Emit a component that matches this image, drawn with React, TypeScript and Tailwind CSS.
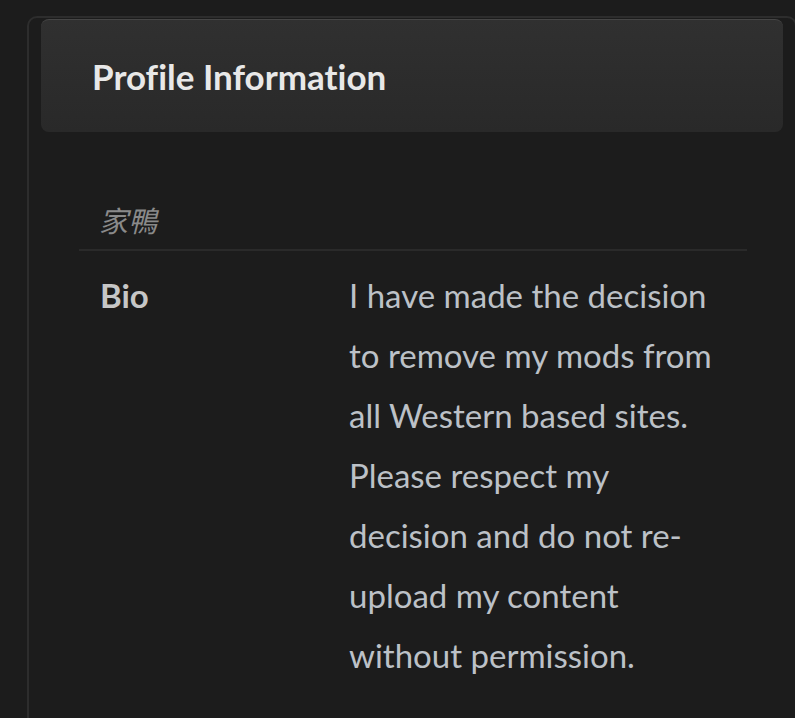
import React from 'react';

const bio = [
  'I have made the decision',
  'to remove my mods from',
  'all Western based sites.',
  'Please respect my',
  'decision and do not re-',
  'upload my content',
  'without permission.',
];

const App = () => {
  return (
    <div
      className="min-h-screen overflow-hidden bg-[#1c1c1c] pl-[27px] pt-[16px] [font-variant-ligatures:none]"
      style={{ fontFamily: 'Lato, "Noto Sans CJK SC", sans-serif' }}
    >
      <div className="w-[770px] rounded-t-[10px] border-2 border-[#2d2d2d] px-[12px] pt-[1px] pb-10">
        <div className="flex h-[113px] items-center rounded-[8px] border-t border-[#464646] bg-gradient-to-b from-[#303030] to-[#292929] pl-[51px]">
          <h2 className="text-[35px] font-bold text-[#e8e8e8]">Profile Information</h2>
        </div>

        <div className="pl-[38px] pr-[36px] pt-[69px]">
          <div className="border-b-2 border-[#2a2a2a] pb-[11px] pl-[20px]">
            <span
              className="text-[29px] leading-[36px] italic text-[#8a8a8a]"
              style={{ fontFamily: '"Noto Sans CJK SC", sans-serif' }}
            >
              家鴨
            </span>
          </div>

          <div className="flex pt-[14px]">
            <div className="w-[249px] shrink-0 pl-[21px] text-[33px] font-bold leading-[60px] text-[#c6c6c6]">
              Bio
            </div>
            <div className="flex-1 pl-[21px] pr-[10px] text-[33px] leading-[60px] text-[#bcc1c7]">
              {bio.map((line) => (
                <div key={line}>{line}</div>
              ))}
            </div>
          </div>
        </div>
      </div>
    </div>
  );
};

export default App;
